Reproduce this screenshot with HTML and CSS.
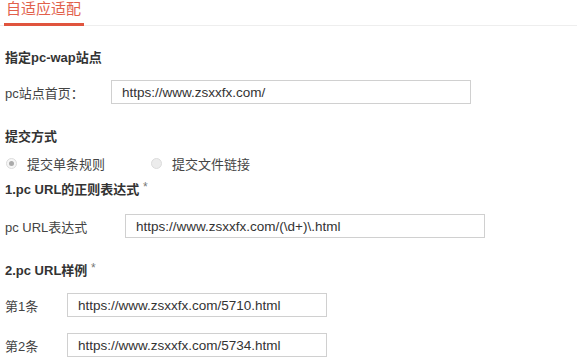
FILE: index.html
```html
<!DOCTYPE html>
<html lang="zh-CN">
<head>
    <meta charset="UTF-8">
    <meta name="viewport" content="width=device-width, initial-scale=1.0">
    <title>自适应适配</title>
    <link rel="stylesheet" href="styles.css">
</head>
<body>

<div class="tabs">
    <span class="tab active">自适应适配</span>
</div>

<div class="panel">
    <h3 class="title first">指定pc-wap站点</h3>
    <div class="row">
        <label class="label w-home" for="home">pc站点首页：</label>
        <input class="field wide" type="text" id="home" value="https://www.zsxxfx.com/">
    </div>

    <h3 class="title gap-lg">提交方式</h3>
    <div class="radios">
        <label class="radio checked"><span class="dot"></span>提交单条规则</label>
        <label class="radio"><span class="dot"></span>提交文件链接</label>
    </div>

    <h3 class="title gap-sm">1.pc URL的正则表达式 <span class="req">*</span></h3>
    <div class="row row-mid">
        <label class="label w-regex" for="regex">pc URL表达式</label>
        <input class="field wide" type="text" id="regex" value="https://www.zsxxfx.com/(\d+)\.html">
    </div>

    <h3 class="title gap-lg">2.pc URL样例 <span class="req">*</span></h3>
    <div class="row">
        <label class="label w-sample" for="s1">第1条</label>
        <input class="field narrow" type="text" id="s1" value="https://www.zsxxfx.com/5710.html">
    </div>
    <div class="row row-next">
        <label class="label w-sample" for="s2">第2条</label>
        <input class="field narrow" type="text" id="s2" value="https://www.zsxxfx.com/5734.html">
    </div>
</div>

</body>
</html>
```

FILE: styles.css
```css
body {
    margin: 0;
    font-family: "Liberation Sans", Arial, "Noto Sans CJK SC", sans-serif;
    font-size: 13px;
    color: #444;
    background: #fff;
}
.tabs {
    height: 25px;
    border-bottom: 1px solid #eee;
    padding-left: 4px;
}
.tab {
    display: inline-block;
    height: 23px;
    padding: 0 3px 0 2px;
    font-size: 15px;
    line-height: 18px;
    color: #e2604b;
    border-bottom: 3px solid #e0543e;
}
.panel {
    padding-left: 5px;
}
.title {
    margin: 0;
    height: 20px;
    line-height: 20px;
    font-size: 13px;
    font-weight: bold;
    color: #333;
}
.title.first {
    margin-top: 22px;
}
.title.gap-lg {
    margin-top: 23px;
}
.title.gap-sm {
    margin-top: 7px;
}
.req {
    font-weight: normal;
    color: #777;
    font-size: 12px;
    vertical-align: top;
    position: relative;
    top: -3px;
}
.row {
    display: flex;
    align-items: center;
    margin-top: 12px;
}
.row-mid {
    margin-top: 14px;
}
.row-next {
    margin-top: 16px;
}
.label {
    flex: none;
}
.w-home {
    width: 106px;
}
.w-regex {
    width: 120px;
}
.w-sample {
    width: 62px;
}
.field {
    box-sizing: border-box;
    height: 24px;
    padding: 0 10px;
    border: 1px solid #d0d0d0;
    font-family: "Liberation Sans", Arial, sans-serif;
    font-size: 13.5px;
    color: #333;
    background: #fff;
    outline: none;
}
.field.wide {
    width: 360px;
}
.field.narrow {
    width: 260px;
}
.radios {
    display: flex;
    align-items: center;
    height: 20px;
    margin-top: 6px;
    gap: 45px;
}
.radio {
    display: flex;
    align-items: center;
    gap: 10px;
    padding-left: 1px;
}
.dot {
    width: 9px;
    height: 9px;
    border: 1px solid #dcdcdc;
    border-radius: 50%;
    background: #ececec;
    position: relative;
}
.radio.checked .dot {
    background: #f6f6f6;
}
.radio.checked .dot::after {
    content: "";
    position: absolute;
    left: 2px;
    top: 2px;
    width: 5px;
    height: 5px;
    border-radius: 50%;
    background: #aaa;
}
```
